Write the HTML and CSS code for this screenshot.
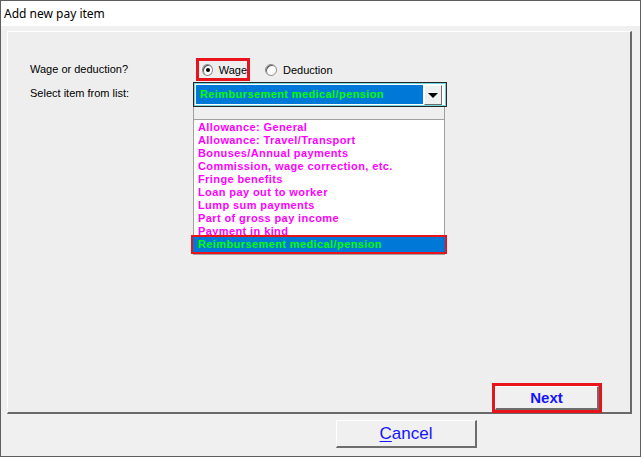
FILE: index.html
```html
<!DOCTYPE html>
<html>
<head>
    <title>Add new pay item</title>
    <link rel="stylesheet" href="styles.css">
</head>
<body>
    <div class="Window">
        <div class="TitleBar">Add new pay item</div>
        <div class="Client">
            <div class="Panel">
                <div class="Form">
                    <div class="Label">Wage or deduction?</div>
                    <div class="Radios">
                        <label class="Radio Marked"><span class="Dot On"></span>Wage</label>
                        <label class="Radio"><span class="Dot"></span>Deduction</label>
                    </div>

                    <div class="Label Second">Select item from list:</div>
                    <div class="Combo">
                        <div class="ComboField">
                            <div class="ComboText">Reimbursement medical/pension</div>
                            <div class="ComboArrow"><span></span></div>
                        </div>
                        <div class="ListHead"></div>
                        <div class="List">
                            <div class="Item">Allowance: General</div>
                            <div class="Item">Allowance: Travel/Transport</div>
                            <div class="Item">Bonuses/Annual payments</div>
                            <div class="Item">Commission, wage correction, etc.</div>
                            <div class="Item">Fringe benefits</div>
                            <div class="Item">Loan pay out to worker</div>
                            <div class="Item">Lump sum payments</div>
                            <div class="Item">Part of gross pay income</div>
                            <div class="Item">Payment in kind</div>
                            <div class="Item Selected">Reimbursement medical/pension</div>
                        </div>
                    </div>
                </div>
                <div class="PanelFoot">
                    <button class="Button Next">Next</button>
                </div>
            </div>
            <div class="Footer">
                <button class="Button Cancel"><u>C</u>ancel</button>
            </div>
        </div>
    </div>
</body>
</html>
```

FILE: styles.css
```css
body {
    margin: 0;
    background: #ffffff;
    font-family: "Liberation Sans", Arial, sans-serif;
}

.Window {
    width: 639px;
    height: 455px;
    border: 1px solid #5f5f5f;
    display: flex;
    flex-direction: column;
    background: #f0f0f0;
}

.TitleBar {
    height: 25px;
    background: #ffffff;
    font-family: "Noto Sans", sans-serif;
    font-size: 12px;
    line-height: 25px;
    padding-left: 3px;
    color: #000000;
}

.Client {
    flex: 1;
    display: flex;
    flex-direction: column;
    padding: 5px 0 0 6px;
}

.Panel {
    width: 622px;
    height: 380px;
    border-top: 1px solid #ffffff;
    border-left: 1px solid #ffffff;
    border-right: 2px solid #696969;
    border-bottom: 2px solid #696969;
    background: #eeeeee;
    display: flex;
    flex-direction: column;
}

.Form {
    display: grid;
    grid-template-columns: 163px 254px;
    grid-template-rows: 23px auto;
    margin: 26px 0 0 22px;
    font-size: 11px;
}

.Label {
    line-height: 23px;
    color: #000000;
}

.Label.Second {
    line-height: 14px;
    padding-top: 5px;
}

.Radios {
    display: flex;
    align-items: center;
}

.Radio {
    display: flex;
    align-items: center;
    height: 17px;
    padding: 0 3px;
    border: 3px solid transparent;
    margin-left: 3px;
}

.Radio.Marked {
    border-color: #e8141c;
    width: 45px;
    box-sizing: content-box;
    padding-right: 0;
}

.Radio + .Radio {
    margin-left: 9px;
}

.Dot {
    width: 10px;
    height: 10px;
    border-radius: 50%;
    border: 1px solid #8a8a8a;
    background: #ffffff;
    margin-right: 6px;
    position: relative;
    box-shadow: inset 1px 1px 0 #5a5a5a;
}

.Dot.On::after {
    content: "";
    position: absolute;
    left: 3px;
    top: 3px;
    width: 4px;
    height: 4px;
    border-radius: 50%;
    background: #000000;
}

.Combo {
    width: 254px;
    margin-top: 1px;
}

.ComboField {
    border: 1px solid #262626;
    box-shadow: inset 0 0 0 1px #6fd8e0;
    display: flex;
    padding: 2px;
    height: 19px;
    background: #ffffff;
}

.ComboText {
    flex: 1;
    background: #0078d7;
    color: #00ff00;
    font-weight: bold;
    letter-spacing: 0.4px;
    line-height: 19px;
    padding-left: 4px;
}

.ComboArrow {
    width: 16px;
    height: 18px;
    margin-left: 1px;
    margin-right: 2px;
    background: #f0f0f0;
    border-top: 1px solid #ffffff;
    border-left: 1px solid #ffffff;
    border-right: 1px solid #6d6d6d;
    border-bottom: 1px solid #6d6d6d;
    display: flex;
    align-items: center;
    justify-content: center;
}

.ComboArrow span {
    width: 0;
    height: 0;
    border-left: 5px solid transparent;
    border-right: 5px solid transparent;
    border-top: 5px solid #000000;
}

.ListHead {
    height: 12px;
    width: 250px;
    border-left: 1px solid #a0a0a0;
    border-right: 1px solid #a0a0a0;
    border-bottom: 1px solid #a0a0a0;
    background: #efefef;
}

.List {
    width: 250px;
    height: 133px;
    border-left: 1px solid #a0a0a0;
    border-right: 1px solid #a0a0a0;
    border-bottom: 1px solid #a0a0a0;
    background: #ffffff;
    padding-top: 1px;
}

.Item {
    height: 13px;
    line-height: 13px;
    padding-left: 4px;
    color: #ff00ff;
    font-weight: bold;
    letter-spacing: 0.4px;
    white-space: nowrap;
}

.Item.Selected {
    position: relative;
    height: 15px;
    line-height: 15px;
    margin: -1px -1px 0 -1px;
    padding-left: 5px;
    background: #0078d7;
    color: #00ff00;
    outline: 2px solid #e8141c;
}

.PanelFoot {
    margin-top: auto;
    display: flex;
    justify-content: flex-end;
    padding-right: 31px;
    padding-bottom: 2px;
}

.Button {
    font-family: "Liberation Sans", Arial, sans-serif;
    background: #f0f0f0;
    color: #1414ff;
    border-top: 1px solid #ffffff;
    border-left: 1px solid #ffffff;
    border-right: 2px solid #6d6d6d;
    border-bottom: 2px solid #6d6d6d;
    padding: 0;
    cursor: default;
}

.Next {
    width: 104px;
    height: 24px;
    font-size: 15px;
    font-weight: bold;
    outline: 3px solid #e8141c;
    outline-offset: 0;
}

.Footer {
    padding: 6px 0 0 329px;
}

.Cancel {
    width: 141px;
    height: 28px;
    font-size: 17px;
}

.Cancel u {
    text-decoration-thickness: 1px;
    text-underline-offset: 2px;
}
```
